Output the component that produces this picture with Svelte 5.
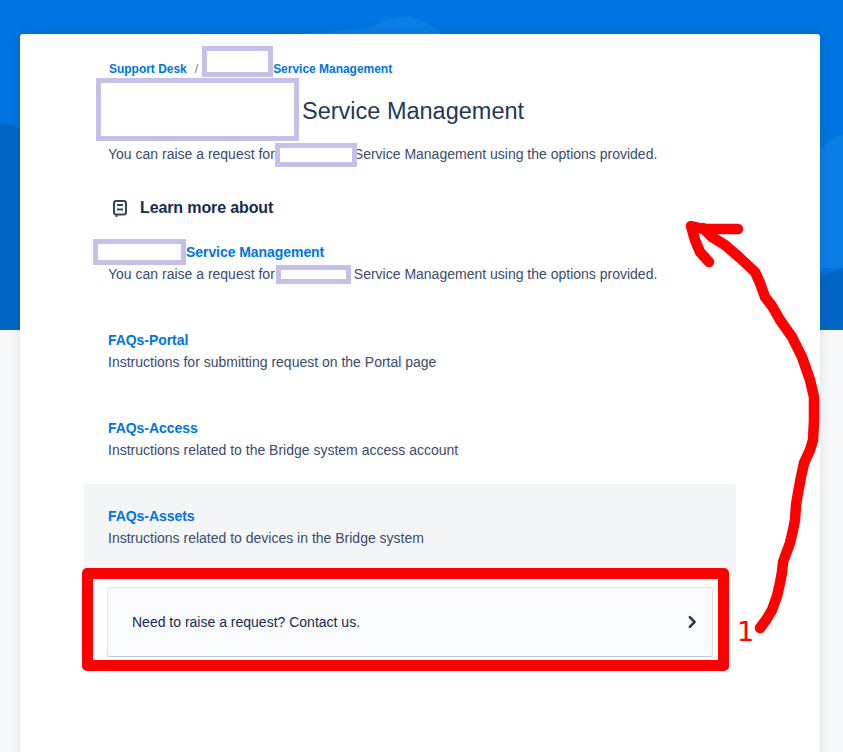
<script>
  const items = [
    { title: "FAQs-Portal", desc: "Instructions for submitting request on the Portal page" },
    { title: "FAQs-Access", desc: "Instructions related to the Bridge system access account" },
    { title: "FAQs-Assets", desc: "Instructions related to devices in the Bridge system", hover: true },
  ];
</script>

<div class="page">
  <div class="banner">
    <svg class="waves" viewBox="0 0 843 330" preserveAspectRatio="none" aria-hidden="true">
      <path d="M300 34C335 30 365 32 385 20C400 13 425 15 440 34Z" fill="#0a7ce3" />
      <path d="M0 122C20 124 45 145 60 180C120 260 300 270 560 290C700 300 780 290 843 268V330H0Z" fill="#0066c4" />
      <path d="M820 150C828 140 836 136 843 135V268H820Z" fill="#0a7ce3" />
    </svg>
  </div>

  <main class="card">
    <header class="head">
      <nav class="crumbs">
        <a href="#top">Support Desk</a>
        <span class="slash">/</span>
        <span class="mask mask-crumb"></span><a href="#top">Service Management</a>
      </nav>
      <div class="title-row">
        <span class="mask mask-title"></span>
        <h1>Service Management</h1>
      </div>
      <p class="intro">You can raise a request for<span class="mask mask-intro"></span>Service Management using the options provided.</p>
    </header>

    <h2 class="learn">
      <svg width="16" height="19" viewBox="0 0 16 19" aria-hidden="true">
        <rect x="2" y="2" width="12" height="13.500" rx="2" fill="none" stroke="#344563" stroke-width="2" />
        <rect x="5" y="5" width="6" height="2" fill="#344563" />
        <rect x="5" y="9.500" width="6" height="2" fill="#344563" />
        <rect x="3.500" y="15" width="2" height="3" fill="#344563" />
      </svg>
      Learn more about
    </h2>

    <ul class="list">
      <li>
        <a href="#top" class="row-title"><span class="mask mask-row"></span>Service Management</a>
        <span class="row-desc">You can raise a request for<span class="mask mask-desc"></span>Service Management using the options provided.</span>
      </li>
      {#each items as item}
        <li class:hover={item.hover}>
          <a href="#top" class="row-title">{item.title}</a>
          <span class="row-desc">{item.desc}</span>
        </li>
      {/each}
    </ul>

    <button class="contact">
      <span>Need to raise a request? Contact us.</span>
      <svg width="10" height="14" viewBox="0 0 10 14" aria-hidden="true">
        <path d="M2.800 2.200L7.600 7l-4.800 4.800" fill="none" stroke="#253858" stroke-width="2.500" stroke-linecap="round" stroke-linejoin="round" />
      </svg>
    </button>
  </main>

  <!-- annotations drawn on top of the screenshot -->
  <div class="red-box"></div>
  <svg class="arrow" width="843" height="752" viewBox="0 0 843 752" aria-hidden="true">
    <path d="M760 628L766 620L772 610L777 596L780 583L782 572L783 562L790 543L793 530L795 520L796 505L798 493L801 477L804 463L810 450L813 440L814 420L814 397L810 380L802 357L792 337L780 320L772 306L765 297L760 283L755 272L740 258L725 245L712 237L703 228" />
    <path d="M738 229L703 229L691 226L695 240L700 252L709 262" />
  </svg>
  <span class="num">1</span>
</div>

<style>
  :global(body) {
    margin: 0;
    overflow: hidden;
    background: #f7f8fa;
  }
  .page {
    position: relative;
    height: 752px;
    overflow: hidden;
    font-family: "Liberation Sans", Arial, sans-serif;
    font-size: 14px;
    line-height: 20px;
    color: #3b4b69;
  }
  .banner {
    position: absolute;
    inset: 0 0 auto 0;
    height: 330px;
    background: #0074e0;
  }
  .waves {
    display: block;
    width: 100%;
    height: 100%;
  }
  .card {
    position: relative;
    box-sizing: border-box;
    margin: 34px 23px 0 20px;
    height: 740px;
    padding: 0 84px 0 64px;
    background: #fff;
    border-radius: 3px;
    box-shadow: 0 0 12px rgba(9, 30, 66, 0.1);
  }
  a {
    color: #0074e0;
    text-decoration: none;
    font-weight: 700;
    letter-spacing: -0.06px;
  }
  .head {
    padding: 26px 24px 0;
  }
  .crumbs {
    display: flex;
    align-items: center;
    height: 18px;
    font-size: 12px;
    line-height: 18px;
    padding-left: 1px;
  }
  .crumbs a {
    letter-spacing: -0.02px;
  }
  .slash {
    margin: 0 4px 0 8px;
    color: #6b778c;
  }
  .mask {
    display: inline-block;
    box-sizing: border-box;
    flex: none;
    position: relative;
    background: #fff;
    border: 5px solid #c8bfe7;
  }
  .mask-crumb {
    width: 71px;
    height: 31px;
    margin: -13px 0 0 0;
    top: -1px;
  }
  .title-row {
    display: flex;
    align-items: center;
    height: 63px;
    margin-left: -12px;
  }
  .mask-title {
    width: 203px;
    height: 63px;
  }
  h1 {
    margin: 2px 0 0 3px;
    font-size: 23.500px;
    font-weight: 400;
    line-height: 28px;
    color: #253858;
  }
  .intro {
    margin: 3px 0 0;
    white-space: nowrap;
  }
  .mask-intro {
    width: 82px;
    height: 24px;
    margin: -2px -3px -2px 0;
    vertical-align: middle;
    z-index: 1;
  }
  .learn {
    display: flex;
    align-items: center;
    gap: 12px;
    margin: 33px 0 0 28px;
    height: 20px;
    font-size: 16px;
    line-height: 20px;
    font-weight: 700;
    letter-spacing: -0.12px;
    color: #172b4d;
  }
  .list {
    list-style: none;
    margin: 2px 0 0;
    padding: 0;
  }
  .list li {
    box-sizing: border-box;
    height: 88px;
    padding: 22px 24px 0;
    border-radius: 3px;
  }
  .list li.hover {
    background: #f4f5f7;
  }
  .row-title,
  .row-desc {
    display: block;
    white-space: nowrap;
  }
  .row-title {
    height: 20px;
    margin-bottom: 2px;
  }
  .mask-row {
    width: 93px;
    height: 26px;
    margin: -3px 0 0 -15px;
    vertical-align: middle;
  }
  .mask-desc {
    width: 75px;
    height: 19px;
    margin: 0 3px 0 1px;
    vertical-align: middle;
    top: -1px;
  }
  .contact {
    display: flex;
    align-items: center;
    justify-content: space-between;
    box-sizing: border-box;
    width: 606px;
    height: 70px;
    margin: 15px 0 0 23px;
    padding: 0 15px 0 24px;
    background: #fafbfc;
    border: 1px solid #dfe1e6;
    border-bottom-color: #c1c7d0;
    border-radius: 3px;
    font: inherit;
    color: #172b4d;
    text-align: left;
  }
  .red-box {
    position: absolute;
    left: 82px;
    top: 568px;
    width: 647px;
    height: 103px;
    box-sizing: border-box;
    border: 11px solid #f00;
    border-radius: 5px;
  }
  .arrow {
    position: absolute;
    left: 0;
    top: 0;
    fill: none;
    stroke: #f00;
    stroke-width: 10.500;
    stroke-linecap: round;
    stroke-linejoin: round;
  }
  .num {
    position: absolute;
    left: 737px;
    top: 616px;
    font-family: "DejaVu Sans", sans-serif;
    font-size: 27px;
    line-height: 32px;
    color: #f00;
  }
</style>
